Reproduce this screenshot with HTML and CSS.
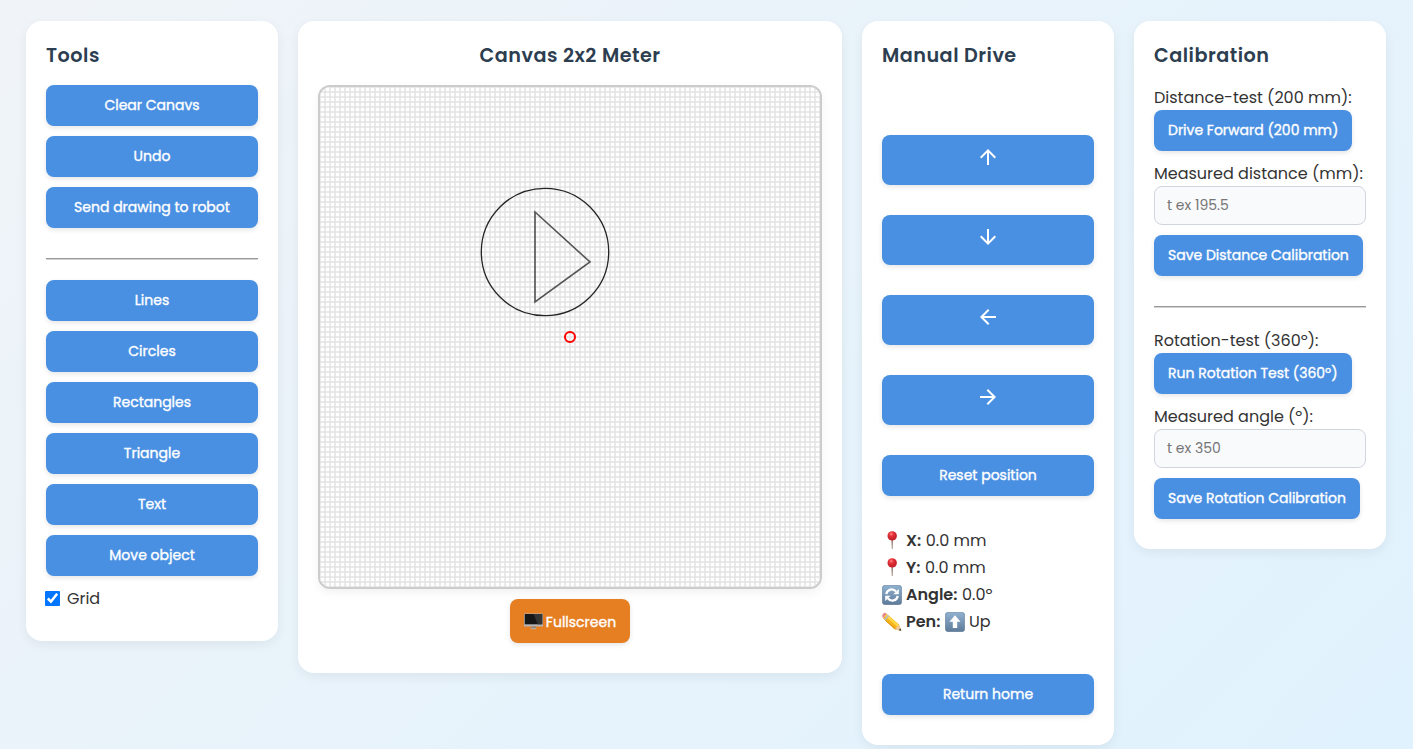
FILE: index.html
```html
<!DOCTYPE html>
<html lang="en">
<head>
<meta charset="utf-8">
<title>Robot Drawing Control</title>
<link rel="stylesheet" href="styles.css">
</head>
<body>
<main class="layout">
  <section class="panel side">
    <h3 class="title">Tools</h3>
    <div class="stack">
      <button class="btn">Clear Canavs</button>
      <button class="btn">Undo</button>
      <button class="btn">Send drawing to robot</button>
    </div>
    <hr class="rule">
    <div class="stack">
      <button class="btn">Lines</button>
      <button class="btn">Circles</button>
      <button class="btn">Rectangles</button>
      <button class="btn">Triangle</button>
      <button class="btn">Text</button>
      <button class="btn">Move object</button>
    </div>
    <label class="check"><input class="box" type="checkbox" checked><span>Grid</span></label>
  </section>

  <section class="panel center">
    <h3 class="title">Canvas 2x2 Meter</h3>
    <div class="board">
      <svg class="drawing" width="500" height="500" viewBox="0 0 500 500">
        <defs>
          <pattern id="grid" x="-1" y="-1" width="5" height="5" patternUnits="userSpaceOnUse">
            <path d="M0 0H5V2H0zM0 0H2V5H0z" fill="#eaeaea"/>
            <path d="M0 0H2V2H0z" fill="#e4e4e4"/>
          </pattern>
        </defs>
        <rect width="500" height="500" fill="url(#grid)"/>
        <circle cx="225" cy="165" r="63.7" fill="none" stroke="#000" stroke-opacity=".85" stroke-width="1.3"/>
        <path d="M215 125L270 175L215 215Z" fill="none" stroke="#000" stroke-opacity=".65" stroke-width="1.6"/>
        <circle cx="250" cy="250" r="5" fill="none" stroke="#f00" stroke-width="2"/>
      </svg>
    </div>
    <button class="btn full">
      <svg class="monitor" width="19" height="17" viewBox="0 0 18 17" preserveAspectRatio="none"><rect x="0" y=".5" width="18" height="13" rx=".6" fill="#b5b5b5"/><rect x=".7" y="1" width="16.6" height="10.3" fill="#171717"/><path d="M9 1h8.3v10.3H13z" fill="#343434"/><path d="M7 13.5h4l.3 2H6.7z" fill="#888"/><path d="M6.3 15.3h5.4v.9H6.300z" fill="#bbb"/></svg>
      <span>Fullscreen</span>
    </button>
  </section>

  <section class="panel side">
    <h3 class="title">Manual Drive</h3>
    <div class="drive">
      <button class="btn arrow"><svg width="24" height="24" viewBox="0 0 24 24"><path fill="#fff" d="M4 12l1.41 1.41L11 7.83V20h2V7.83l5.58 5.59L20 12l-8-8-8 8z"/></svg></button>
      <button class="btn arrow"><svg width="24" height="24" viewBox="0 0 24 24"><path fill="#fff" d="M20 12l-1.41-1.41L13 16.17V4h-2v12.17l-5.58-5.59L4 12l8 8 8-8z"/></svg></button>
      <button class="btn arrow"><svg width="24" height="24" viewBox="0 0 24 24"><path fill="#fff" d="M20 11H7.83l5.59-5.59L12 4l-8 8 8 8 1.41-1.41L7.83 13H20v-2z"/></svg></button>
      <button class="btn arrow"><svg width="24" height="24" viewBox="0 0 24 24"><path fill="#fff" d="M12 4l-1.41 1.41L16.17 11H4v2h12.17l-5.58 5.59L12 20l8-8z"/></svg></button>
      <button class="btn">Reset position</button>
    </div>
    <svg width="0" height="0" class="defs">
      <defs>
        <linearGradient id="key" x2="0" y2="1"><stop offset="0" stop-color="#90b1d0"/><stop offset="1" stop-color="#5e7b99"/></linearGradient>
        <radialGradient id="ball" cx=".4" cy=".3"><stop offset="0" stop-color="#ff8585"/><stop offset=".45" stop-color="#e8333a"/><stop offset="1" stop-color="#c9242d"/></radialGradient>
        <symbol id="pin" viewBox="0 0 20 20"><path d="M9.4 9h1.600l-.4 9h-.8z" fill="#987f78"/><circle cx="10.2" cy="4.9" r="4.700" fill="url(#ball)"/></symbol>
      </defs>
    </svg>
    <div class="status">
      <p class="line"><svg class="emoji" width="20" height="20"><use href="#pin"/></svg><b>X:</b><span>0.0 mm</span></p>
      <p class="line"><svg class="emoji" width="20" height="20"><use href="#pin"/></svg><b>Y:</b><span>0.0 mm</span></p>
      <p class="line"><svg class="emoji" width="20" height="20" viewBox="0 0 20 20"><rect x=".3" y=".3" width="19.4" height="19.4" rx="3" fill="url(#key)" stroke="#54708d" stroke-width=".5"/><g fill="none" stroke="#fff" stroke-width="2.3"><path d="M4.3 9.2C5 3.9 11.3 3 14.1 6.6"/><path d="M15.7 10.8C15 16.1 8.700 17 5.900 13.400"/></g><path d="M16.800 4v5.200h-5.500zM3.200 16v-5.200h5.500z" fill="#fff"/></svg><b>Angle:</b><span>0.0º</span></p>
      <p class="line"><svg class="emoji" width="20" height="20" viewBox="0 0 20 20"><path d="M4.600 1.800L17 12.400L19.300 18.700L12.600 17.500L1 6.200z" fill="#f5b51b"/><path d="M3.700 3.300L16.300 14" stroke="#ffdc4a" stroke-width="2"/><path d="M2.700 7.700L13.700 17.100" stroke="#d98c12" stroke-width="1"/><path d="M1 6.200L4.700 1.800Q2.800 0 1.100 1.700T1 6.200z" fill="#e8888d"/><path d="M2 7.200L5.800 2.800L7.100 4L3.300 8.400z" fill="#b9bdc0"/><path d="M12.600 17.500L17 12.400L19.300 18.700z" fill="#edc99c"/><path d="M16.800 18.200L18.400 16.200L19.300 18.700z" fill="#333"/></svg><b>Pen:</b><svg class="emoji" width="20" height="20" viewBox="0 0 20 20"><rect x=".3" y=".3" width="19.4" height="19.4" rx="3" fill="url(#key)" stroke="#54708d" stroke-width=".5"/><path d="M10 3.200L15.600 9.800H12.200V16H7.800V9.800H4.400z" fill="#fff"/></svg><span>Up</span></p>
    </div>
    <div class="stack home"><button class="btn">Return home</button></div>
  </section>

  <section class="panel side">
    <h3 class="title">Calibration</h3>
    <div class="field">
      <div class="label">Distance-test (200 mm):</div>
      <button class="btn">Drive Forward (200 mm)</button>
      <div class="label">Measured distance (mm):</div>
      <input class="input" type="text" placeholder="t ex 195.5">
      <button class="btn">Save Distance Calibration</button>
    </div>
    <hr class="rule">
    <div class="field">
      <div class="label">Rotation-test (360º):</div>
      <button class="btn">Run Rotation Test (360º)</button>
      <div class="label">Measured angle (º):</div>
      <input class="input" type="text" placeholder="t ex 350">
      <button class="btn">Save Rotation Calibration</button>
    </div>
  </section>
</main>
</body>
</html>
```
FILE: styles.css
```css
* { box-sizing: border-box; }
html { height: 100%; }
body {
  margin: 0;
  min-height: 100%;
  overflow: hidden;
  font-family: Poppins, Inter, "Open Sans", sans-serif;
  font-size: 16px;
  color: #333;
  background: linear-gradient(135deg, #f0f4f8, #e0f2fe) no-repeat;
}
.layout { display: flex; align-items: flex-start; gap: 20px; padding: 21px 26px 4px; }
.panel { background: #fff; border-radius: 16px; padding: 20px; box-shadow: 0 4px 12px rgba(0,0,0,.06); }
.side { width: 252px; padding-bottom: 30px; }
.center { width: 544px; padding-bottom: 30px; display: flex; flex-direction: column; align-items: center; }
.title { margin: 0 0 14px; height: 30px; line-height: 29px; font-size: 19.2px; font-weight: 600; letter-spacing: .5px; color: #2c3e50; white-space: nowrap; }
.stack { display: flex; flex-direction: column; gap: 10px; }
.btn {
  height: 41px; padding: 0 14px; border: 0; border-radius: 8px;
  background: #4a90e2; color: #fff;
  font: 400 14px/21px Poppins, Inter, "Open Sans", sans-serif;
  -webkit-text-stroke: .35px #fff;
  white-space: nowrap;
  box-shadow: 0 2px 5px rgba(0,0,0,.1);
}
.rule { height: 2px; margin: 30px 0 20px; border: solid; border-width: 1px 0; border-color: #9a9a9a #e6e6e6 #d2d2d2; }
.check { display: flex; align-items: center; height: 25px; margin-top: 10px; }
.box { width: 13px; height: 13px; margin: 0 8px 0 0; transform: scale(1.2); accent-color: #0075ff; }
.board { border: 2px solid #ccc; border-radius: 12px; width: 504px; height: 504px; overflow: hidden; box-shadow: 0 4px 10px rgba(0,0,0,.05); }
.drawing { display: block; }
.full { width: 120px; height: 44px; margin-top: 10px; padding: 2px 0 0; background: #e67e22; display: flex; align-items: center; justify-content: center; gap: 3px; }
.monitor { margin-bottom: 2px; }
.drive { display: flex; flex-direction: column; gap: 30px; margin-top: 64px; }
.arrow { height: 50px; display: flex; justify-content: center; padding-top: 10px; align-items: flex-start; }
.arrow svg { stroke: none; }
.defs { display: block; }
.status { margin-top: 31px; }
.line { display: flex; align-items: center; height: 27px; margin: 0; gap: 4px; white-space: nowrap; }
.line b { font-weight: 600; margin-right: .6px; }
.emoji { flex: none; }
.home { margin-top: 39px; }
.field { display: flex; flex-direction: column; align-items: flex-start; }
.label { height: 25px; line-height: 25px; white-space: nowrap; }
.field .btn + .label { margin-top: 10px; }
.input { width: 212px; height: 39px; padding: 0 12px; margin-bottom: 10px; border: 1px solid #d0d5dd; border-radius: 8px; background: #f9fafc; font: 14px Poppins, Inter, "Open Sans", sans-serif; }
.input::placeholder { color: #757575; }
```
